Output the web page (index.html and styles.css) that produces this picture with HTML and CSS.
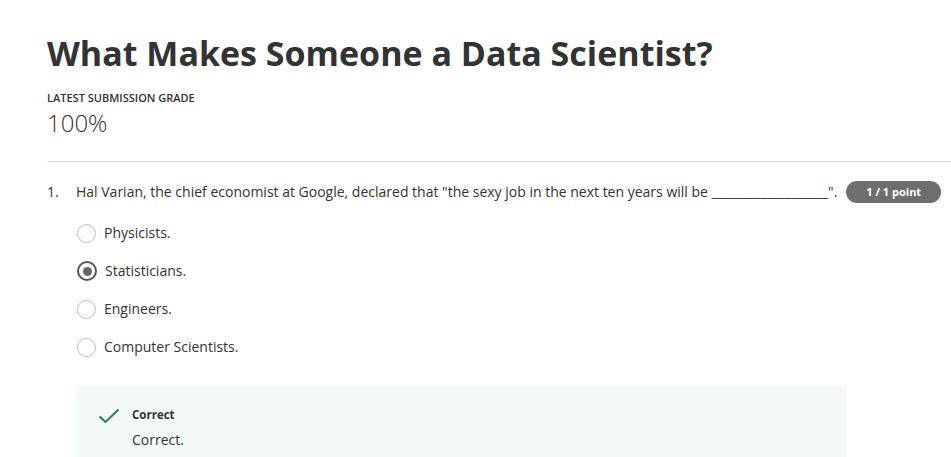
FILE: index.html
```html
<!DOCTYPE html>
<html>
<head>
<meta charset="utf-8">
<link rel="stylesheet" href="styles.css">
</head>
<body>
<div class="page">
  <h1 class="title">What Makes Someone a Data Scientist?</h1>
  <div class="grade-label">LATEST SUBMISSION GRADE</div>
  <div class="grade">100%</div>
  <hr class="divider">
  <div class="question">
    <div class="q-head">
      <span class="q-num">1.</span>
      <span class="q-text">Hal Varian, the chief economist at Google, declared that "the sexy job in the next ten years will be ___________________".</span>
      <span class="badge">1 / 1 point</span>
    </div>
    <div class="options">
      <div class="option"><span class="radio"></span><span>Physicists.</span></div>
      <div class="option"><span class="radio checked"></span><span>Statisticians.</span></div>
      <div class="option"><span class="radio"></span><span>Engineers.</span></div>
      <div class="option"><span class="radio"></span><span>Computer Scientists.</span></div>
    </div>
    <div class="feedback">
      <svg class="check" width="22" height="16" viewBox="0 0 22 16"><path d="M1.5 8.5 L7.5 14 L20.5 1.5" fill="none" stroke="#2a7a5c" stroke-width="2"/></svg>
      <div class="fb-body">
        <div class="fb-title">Correct</div>
        <div class="fb-text">Correct.</div>
      </div>
    </div>
  </div>
</div>
</body>
</html>
```
FILE: styles.css
```css
html, body { margin: 0; padding: 0; background: #fff; }
body { font-family: "Open Sans", "Liberation Sans", sans-serif; color: #333; overflow: hidden; }
.page { padding: 28px 0 0 47px; }
.title { margin: 0; font-size: 34px; font-weight: 700; line-height: 50px; color: #333; letter-spacing: 0; }
.grade-label { margin-top: 12px; font-size: 11px; font-weight: 600; line-height: 16px; color: #333; }
.grade { margin-top: 4px; font-size: 24px; font-weight: 300; line-height: 26px; color: #333; }
.divider { margin: 25px 0 0 0; border: 0; border-top: 1px solid #e2e2e2; height: 0; }
.question { padding-top: 19px; }
.q-head { display: flex; align-items: center; font-size: 14px; line-height: 22px; }
.q-num { width: 29px; flex: none; }
.q-text { flex: none; }
.badge { margin-left: 9px; background: #6e6e6e; color: #fff; font-size: 11px; font-weight: 700; border-radius: 11px; height: 22px; line-height: 22px; padding: 0 20px; }
.options { margin: 19px 0 0 30px; display: flex; flex-direction: column; gap: 16px; }
.option { display: flex; align-items: center; font-size: 14px; line-height: 22px; gap: 8px; }
.radio { width: 17px; height: 17px; border: 1.5px solid #bdbdbd; border-radius: 50%; box-sizing: content-box; display: flex; align-items: center; justify-content: center; }
.radio.checked { border: 2px solid #555; width: 16px; height: 16px; }
.radio.checked::after { content: ""; width: 9px; height: 9px; border-radius: 50%; background: #666; }
.feedback { margin: 28px 0 0 30px; width: 770px; background: #f3f9f6; display: flex; padding: 21px 0 14px 21px; box-sizing: border-box; gap: 12px; }
.check { margin-top: 1px; flex: none; }
.fb-title { font-size: 11.5px; font-weight: 700; line-height: 16px; }
.fb-text { font-size: 14px; line-height: 20px; margin-top: 7px; }
```
